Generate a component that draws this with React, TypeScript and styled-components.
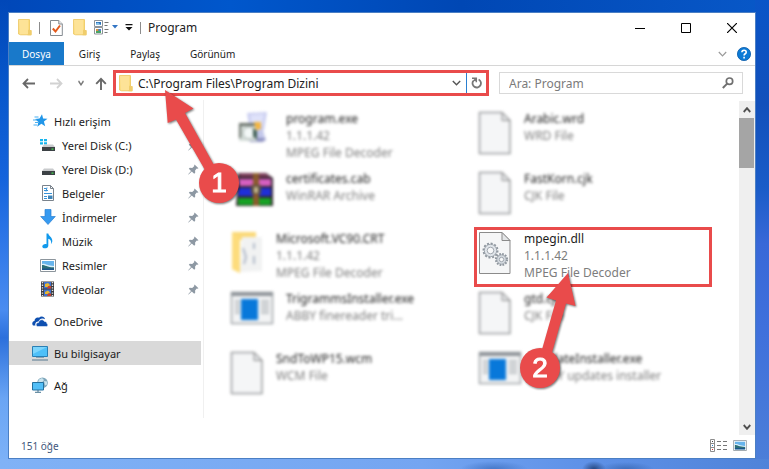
import React from 'react';
import styled, { createGlobalStyle, css } from 'styled-components';

const RED = '#e94b4b';

const GlobalStyle = createGlobalStyle`
  *, *::before, *::after { box-sizing: border-box; }
  body { margin: 0; font-family: 'Noto Sans', 'Open Sans', sans-serif; color: #222; }
  button, input { font: inherit; color: inherit; background: none; border: 0; margin: 0; padding: 0; }
  button { display: inline-flex; align-items: center; justify-content: center; }
  svg { display: block; flex: none; }
`;

const Desktop = styled.div`
  min-height: 100vh;
  display: flex;
  padding: 12px 13px 10px 8px;
  background:
    radial-gradient(ellipse 12px 8px at 594px 100%, #2b4f8c 10%, transparent),
    radial-gradient(ellipse 28px 7px at 626px 100%, #4272c0 10%, transparent),
    radial-gradient(ellipse 34px 8px at 494px 100%, #4a7ccc 10%, transparent),
    linear-gradient(90deg, #80b2f6, #74a5f1 55%, #5f92e8 75%, #4f83d9) 0 100% / 100% 10px no-repeat,
    linear-gradient(#0a55c8, #1250bb 22%, #1a5cc8 40%, #3868d8 52%, #3f70dc 70%, #4c7fd8) 100% 0 / 14px 100% no-repeat,
    linear-gradient(#0047b8, #0858cc 20%, #1464dc 38%, #2f78e8 52%, #4a8cf0 66%, #2c70dc 72%, #6aa5f4 85%, #7fb3f8) 0 0 / 8px 100% no-repeat,
    linear-gradient(90deg, #0047b8, #0057cc 30%, #0047b4 60%, #0858c8);
`;

const Window = styled.div`
  flex: 1;
  min-width: 0;
  display: flex;
  flex-direction: column;
  background: #fff;
  border: 1px solid #4b7fc4;
`;

const TitleBar = styled.header`
  display: flex;
  align-items: center;
  height: 29px;
  padding-left: 9px;
`;

const QuickTools = styled.div`
  display: flex;
  align-items: center;
  gap: 7px;
`;

const Separator = styled.span`
  width: 1px;
  height: 12px;
  background: #8c8c8c;
`;

const Title = styled.h1`
  flex: 1;
  margin: 0;
  padding-left: 7px;
  font-size: 12px;
  line-height: 16px;
  font-weight: 400;
`;

const WindowButton = styled.button`
  width: 46px;
  height: 28px;
`;

const Ribbon = styled.nav`
  display: flex;
  height: 24px;
  border-bottom: 1px solid #d6d6d6;
  font-size: 10px;
`;

const Tab = styled.button<{ $active?: boolean }>`
  height: 23px;
  padding: 0 15px;
  color: #1c1c1c;
  ${p => p.$active && css`
    padding: 0 13px;
    color: #fff;
    background: #1979ca;
  `}
`;

const RibbonEnd = styled.div`
  display: flex;
  align-items: center;
  gap: 10px;
  margin-left: auto;
  padding-right: 4px;
`;

const AddressRow = styled.div`
  display: flex;
  align-items: flex-start;
  height: 34px;
  padding: 4px 12px 0 9px;
  font-size: 12px;
`;

const NavButtons = styled.div`
  display: flex;
  align-items: center;
  height: 26px;
`;

const NavButton = styled.button<{ $w: number }>`
  width: ${p => p.$w}px;
  height: 22px;
`;

const AddressBar = styled.form`
  position: relative;
  flex: 1;
  min-width: 0;
  display: flex;
  align-items: center;
  height: 26px;
  margin-right: 10px;
  padding-left: 3px;
  border: 3px solid ${RED};
`;

const TextInput = styled.input`
  flex: 1;
  min-width: 0;
  height: 20px;
  padding-left: 5px;
  outline: 0;
  &::placeholder { color: #7b7b7b; opacity: 1; }
`;

const BarButton = styled.button<{ $divided?: boolean }>`
  width: 20px;
  height: 20px;
  ${p => p.$divided && css`border-left: 1px solid #2a7fd0;`}
`;

const SearchBox = styled.form`
  display: flex;
  align-items: center;
  width: 244px;
  height: 22px;
  margin-top: 2px;
  padding: 0 4px;
  border: 1px solid #d9d9d9;
`;

const Body = styled.div`
  flex: 1;
  display: flex;
`;

const Sidebar = styled.nav`
  width: 195px;
  margin-bottom: 17px;
  padding: 9px 2px 0 0;
  border-right: 1px solid #f0f0f0;
`;

const TreeGroup = styled.ul`
  list-style: none;
  margin: 0 0 8px;
  padding: 0;
`;

const TreeItem = styled.a<{ $child?: boolean; $selected?: boolean }>`
  display: flex;
  align-items: center;
  gap: 6px;
  height: 24px;
  padding: 0 2px 0 ${p => (p.$child ? 31 : 23)}px;
  font-size: 11px;
  color: #1c1c1c;
  text-decoration: none;
  background: ${p => (p.$selected ? '#d9d9d9' : 'transparent')};
`;

const TreeLabel = styled.span`
  flex: 1;
`;

const FileGrid = styled.ul`
  flex: 1;
  display: grid;
  grid-template-columns: 1fr 1fr;
  grid-auto-rows: 60px;
  column-gap: 10px;
  align-content: start;
  list-style: none;
  margin: 0;
  padding: 7px 27px 0 22px;
`;

const FileItem = styled.li<{ $marked?: boolean }>`
  position: relative;
  display: flex;
  min-width: 0;
  padding: 1px;
  border: 3px solid ${p => (p.$marked ? RED : 'transparent')};
`;

const FileContent = styled.div<{ $soft: boolean }>`
  display: flex;
  gap: 12px;
  min-width: 0;
  ${p => p.$soft && css`filter: blur(0.1rem);`}
`;

const IconSlot = styled.span<{ $wide?: boolean }>`
  flex: none;
  width: ${p => (p.$wide ? 44 : 34)}px;
`;

const FileText = styled.div`
  display: flex;
  flex-direction: column;
  gap: 1px;
  font-size: 12px;
  line-height: 16px;
  white-space: nowrap;
  color: #7d7d7d;
`;

const FileName = styled.div`
  color: #1c1c1c;
`;

const Scrollbar = styled.div`
  display: flex;
  flex-direction: column;
  width: 16px;
  margin-top: 1px;
  background: #efefef;
`;

const ScrollButton = styled.button`
  width: 15px;
  height: 17px;
`;

const Thumb = styled.div`
  width: 15px;
  height: 50px;
  margin-bottom: auto;
  background: #a5a5a5;
`;

const StatusBar = styled.footer`
  display: flex;
  align-items: center;
  height: 23px;
  padding: 0 8px 2px 12px;
  font-size: 10px;
  color: #3f587c;
`;

const StatusText = styled.span`
  flex: 1;
`;

const StatusButton = styled.button`
  margin-left: 6px;
`;

const Callout = styled.div<{ $x: number; $y: number; $w: number; $h: number; $side: 'start' | 'end' }>`
  position: absolute;
  z-index: 2;
  left: ${p => p.$x}px;
  top: ${p => p.$y}px;
  width: ${p => p.$w}px;
  height: ${p => p.$h}px;
  display: flex;
  align-items: flex-end;
  justify-content: flex-${p => p.$side};
  pointer-events: none;
  filter: drop-shadow(1px 1px 1px rgba(0, 0, 0, 0.55));
`;

const CalloutArrow = styled.svg`
  position: absolute;
  inset: 0;
`;

const Badge = styled.span`
  position: relative;
  display: flex;
  align-items: center;
  justify-content: center;
  width: 40px;
  height: 40px;
  border-radius: 50%;
  background: ${RED};
  color: #fff;
  font: 28px/40px 'Liberation Sans', sans-serif;
  -webkit-text-stroke: 1px #fff;
`;

const FolderSmall = () => (
  <svg width="14" height="17" viewBox="0 0 14 17">
    <path d="M0.5 0.5h11v11h1.7v4.3H2.5L0.5 15z" fill="#fbdd80" stroke="#ecc762" strokeWidth="0.8" />
    <path d="M11.2 1v9l-1.6 2v4.2h3.7v-4.6l-1.4-.6V1z" fill="#f0cd6b" />
    <path d="M1 1h9v14H2z" fill="#fde397" />
  </svg>
);

const DocCheck = () => (
  <svg width="13" height="16" viewBox="0 0 13 16">
    <path d="M.5.5h8.3l3.5 3.5v11.5H.5z" fill="#fff" stroke="#858b91" />
    <path d="M8.8.5V4h3.5" fill="#eee" stroke="#858b91" />
    <path d="M2.8 8.5l2.7 3L10 5.5" fill="none" stroke="#e35a1c" strokeWidth="2" />
  </svg>
);

const LayoutIcon = () => (
  <svg width="24" height="15" viewBox="0 0 24 15">
    <path d="M.5.5h8v6h-8zM.5 7.500h8v6.500h-8z" fill="#fff" stroke="#8d9399" />
    <path d="M2 2h5v3H2z" fill="#2b73bb" />
    <path d="M2 3.500l2-1 3 2.500H2z" fill="#8cc4ea" />
    <path d="M2 9h5v4H2z" fill="#4aa564" />
    <path d="M2 9h2.500v2H2z" fill="#d9923e" />
    <path d="M4.500 9H7v2H4.500z" fill="#4c7bd0" />
    <path d="M10.500 2.500h4M10.500 5.500h3M10.500 9.500h4M10.500 12.500h3" stroke="#777" />
    <path d="M18 5h6l-3 3.500z" fill="#3275c4" />
  </svg>
);

const Overflow = () => (
  <svg width="8" height="7" viewBox="0 0 8 7">
    <path d="M.5 0h7v1.300h-7zM0.500 3h7L4 6.500z" fill="#111" />
  </svg>
);

const Chevron = ({ up, color = '#666', w = 1.2, size = 9 }: { up?: boolean; color?: string; w?: number; size?: number }) => (
  <svg width={size} height="6" viewBox="0 0 9 6" preserveAspectRatio="none">
    <path d={up ? 'M.8 5l3.700-3.800L8.200 5' : 'M.8 1l3.700 3.800L8.200 1'} fill="none" stroke={color} strokeWidth={w} />
  </svg>
);

const BackArrow = ({ color, flip }: { color: string; flip?: boolean }) => (
  <svg width="13" height="11" viewBox="0 0 13 11">
    <path d={flip ? 'M0 5.500h11.500M7 1l4.500 4.500L7 10' : 'M13 5.500H1.500M6 1L1.500 5.500 6 10'} fill="none" stroke={color} strokeWidth="1.800" />
  </svg>
);

const UpArrow = () => (
  <svg width="12" height="13" viewBox="0 0 12 13">
    <path d="M6 13V1.800M1.200 6.800L6 1.800l4.800 5" fill="none" stroke="#686868" strokeWidth="1.900" />
  </svg>
);

const Refresh = () => (
  <svg width="11" height="12" viewBox="0 0 11 12">
    <path d="M7.600 2.500A4.200 4.200 0 1 1 2.200 4" fill="none" stroke="#777" strokeWidth="1.800" />
    <path d="M1 1.200h4.300v4M5.300 1.200L2 4.500" fill="none" stroke="#777" strokeWidth="1.500" />
  </svg>
);

const SearchIcon = () => (
  <svg width="12" height="12" viewBox="0 0 12 12">
    <circle cx="7.500" cy="4.200" r="3.200" fill="none" stroke="#707070" strokeWidth="1.700" />
    <path d="M5.200 6.600L.8 11" stroke="#707070" strokeWidth="2" />
  </svg>
);

const HelpIcon = () => (
  <svg width="14" height="14" viewBox="0 0 14 14">
    <circle cx="7" cy="7" r="6.600" fill="#0b7ad6" stroke="#0a5aa8" strokeWidth="0.800" />
    <path d="M4.900 5.200c0-2.600 4.300-2.500 4.300 0 0 1.600-2.100 1.500-2.100 3.200M7.100 9.700v1.700" fill="none" stroke="#fff" strokeWidth="1.600" />
  </svg>
);

const Pin = () => (
  <svg width="11" height="11" viewBox="0 0 11 11">
    <path d="M6.500.5l4 3.800-1.200.4-.6-.2-1.600 2 .1 2.300-1 .9-2.400-2.200L.6 10.500l-.4-.3L3 7 .8 4.700l1-.9 2.400.2 2.200-1.900-.3-.7z" fill="#8d98a3" />
  </svg>
);

const QuickIcon = () => (
  <svg width="16" height="14" viewBox="0 0 16 14">
    <path d="M10 .3l1.100 4.200 4.400.2-3.600 2.700 1.300 4.900-3.800-2.600-4.200 3 1.200-4.800L3 5l4.500-.4z" fill="#2196e8" />
    <path d="M2.500 3h4M1 6h4M3 8.500h3M1.500 11h3.500" stroke="#48b0f2" strokeWidth="1.200" />
  </svg>
);

const Disk = ({ system }: { system?: boolean }) => (
  <svg width="16" height="14" viewBox="0 0 16 14">
    {system && <path d="M0 1h3v2.300H0zM4 1h3v2.300H4zM0 4.300h3v2.300H0zM4 4.300h3v2.300H4z" fill="#16b5ee" />}
    <path d="M4 6.500h9L15 9H2z" fill="#c9cbcd" />
    <path d="M2 9h13v4H2z" fill="#3c4145" />
    <path d="M11.500 10.500h2v1.200h-2z" fill="#43e04e" />
  </svg>
);

const DocsIcon = () => (
  <svg width="16" height="16" viewBox="0 0 16 16">
    <path d="M2.500.5h8l3 3v12h-11z" fill="#fff" stroke="#7a838c" />
    <path d="M10.500.5v3h3" fill="none" stroke="#7a838c" />
    <path d="M4 3.500h2.500M4 5.500h4M4 8.500h8M4 11.500h3M4 13.500h3M7 2.500l-1 4" stroke="#3792d8" />
    <path d="M8 10.500h4.500v3.500H8z" fill="#3e84b8" />
  </svg>
);

const DownIcon = () => (
  <svg width="16" height="16" viewBox="0 0 16 16">
    <path d="M5 .5h6v7h4.300L8 15.500.7 7.500H5z" fill="#369af0" stroke="#2a7fd2" strokeWidth="0.700" />
  </svg>
);

const MusicIcon = () => (
  <svg width="16" height="16" viewBox="0 0 16 16">
    <path d="M6.500.5h1.800c.5 3 4.700 3.800 3.900 8.200-.1.900-.6 1.800-1.300 2.600.9-3-.4-4.900-2.600-5.600v7c0 3.300-6 3.500-6 .8 0-1.900 2.300-2.800 4.200-2.300z" fill="#1199ec" />
  </svg>
);

const PictureIcon = ({ small }: { small?: boolean }) => (
  <svg width={small ? 14 : 16} height={small ? 11 : 13} viewBox="0 0 16 13">
    <path d="M.5.5h15v12H.5z" fill="#fff" stroke="#8c959c" />
    <path d="M2 2h12v9H2z" fill="#67b4ec" />
    <path d="M2 5c3-1 5 2 12 2v2H2z" fill="#d9effa" />
    <path d="M2 6c3 0 5 2.200 12 2.300V11H2z" fill="#2c6f78" />
    <path d="M2 9.500h12V11H2z" fill="#1c548c" />
  </svg>
);

const VideoIcon = () => (
  <svg width="16" height="16" viewBox="0 0 16 16">
    <path d="M1 .5h13v15H1z" fill="#3b3b3f" />
    <path d="M2.500 1v14M12.500 1v14" stroke="#e3e3e3" strokeWidth="1.400" strokeDasharray="1.300 1.300" />
    <path d="M4 1h7v6.500H4zM4 8.500h7V15H4z" fill="#3e72d0" />
    <path d="M5 3l3-1 2 2-2 2H5z" fill="#e8b732" />
    <path d="M8 5h3v2.500H7z" fill="#c8402e" />
    <path d="M5 11l3-1.500 2 2-2 1.500H5z" fill="#e8b732" />
    <path d="M8 12.500h3V15H7z" fill="#c8402e" />
  </svg>
);

const CloudIcon = () => (
  <svg width="16" height="11" viewBox="0 0 16 11">
    <path d="M1 9.500C-.6 7.500.6 5.300 2.500 5 2.500 2.300 5 .9 7 1.800 8.800-.3 12.500.2 13 3.200 9.500 1.500 7 3.700 6.500 5.500 4 5.500 2.700 7.500 3.500 9.500z" fill="#0e4fb0" />
    <path d="M5.500 10.500C3.400 10 3.700 6.700 6.600 6.600 7 3.500 11 2.700 12.500 5.500c2-.1 2.500 1.300 2.300 2 1.600.5 1.300 3-.6 3z" fill="#0e4fb0" stroke="#fff" strokeWidth="0.500" />
  </svg>
);

const PcIcon = () => (
  <svg width="16" height="15" viewBox="0 0 16 15">
    <path d="M.5.500h15v10H.5z" fill="#4fc0f8" stroke="#2a7fb4" />
    <path d="M1 1h14L1 8z" fill="#7dd5fc" />
    <path d="M4 11.500h8" stroke="#8aa3b3" />
    <path d="M0 14h16" stroke="#57788f" />
  </svg>
);

const NetworkIcon = () => (
  <svg width="16" height="16" viewBox="0 0 16 16">
    <circle cx="10.500" cy="5.700" r="5.300" fill="#7fa7bb" />
    <path d="M7 2.500l3-1.500 2 2-2 2.500H6zM12 4l3 .5v3l-2 1z" fill="#c9e3ee" />
    <path d="M.5 5.500h11v7.500H.5z" fill="#52bff7" stroke="#24719f" />
    <path d="M3 15.300h6M6 13v2" stroke="#47758f" />
  </svg>
);

const PageIcon = ({ gears }: { gears?: boolean }) => (
  <svg width="34" height="44" viewBox="0 0 34 44">
    <path d="M1.500 1.500h22.500l8 8v33H1.500z" fill="#f5f6f7" stroke={gears ? '#8b8b8b' : '#9a9d9f'} strokeWidth={gears ? 1 : 1.500} />
    <path d="M24 1.500v8h8z" fill="#e4e6e8" stroke="#8b8b8b" />
    {gears && (
      <>
        <circle cx="12.500" cy="19.500" r="7" fill="none" stroke="#8f979f" strokeWidth="2" strokeDasharray="2 1.660" />
        <circle cx="12.500" cy="19.500" r="6.200" fill="#dfe4e9" stroke="#8f979f" strokeWidth="0.800" />
        <circle cx="12.500" cy="19.500" r="3.300" fill="#f7f8f9" stroke="#8f979f" strokeWidth="0.800" />
        <circle cx="23.500" cy="28.500" r="5.600" fill="none" stroke="#8f979f" strokeWidth="2" strokeDasharray="1.700 1.230" />
        <circle cx="23.500" cy="28.500" r="4.700" fill="#d3d9df" stroke="#8f979f" strokeWidth="0.800" />
        <circle cx="23.500" cy="28.500" r="2.200" fill="#f7f8f9" stroke="#8f979f" strokeWidth="0.800" />
      </>
    )}
  </svg>
);

const SetupIcon = () => (
  <svg width="44" height="44" viewBox="0 0 44 44">
    <path d="M17 2l20-1-3 18H20z" fill="#c9cdf0" />
    <path d="M20 4l14-1-2 12H22z" fill="#dfe2fa" />
    <path d="M20 19h13l3 11H16z" fill="#c3c7ea" />
    <path d="M18 27h18l-3 4H20z" fill="#8f93c2" />
    <path d="M9 12h18v18H9z" fill="#d5ddd9" />
    <path d="M9 12h20v3H9zM9 15h2v12H9z" fill="#6b736c" />
    <circle cx="19" cy="22" r="6" fill="#f3f8f7" stroke="#a6b1ad" />
    <path d="M23 17l4 3v9l-4-4z" fill="#3f5e53" />
    <path d="M24 11h7v7l-5 1z" fill="#f3b542" />
  </svg>
);

const ArchiveIcon = () => (
  <svg width="44" height="44" viewBox="0 0 44 44">
    <path d="M8 2h28l7 5v28H6z" fill="#33242f" />
    <path d="M9 2h26l6 4H10z" fill="#7c3d5a" />
    <path d="M8 8h33v7H8z" fill="#d65fc0" />
    <path d="M8 17h33v8H8z" fill="#1f2fd8" />
    <path d="M8 27h33v7H8z" fill="#17a325" />
    <path d="M23 2h6v33h-6z" fill="#8a5a2c" />
    <path d="M21 14h10v9H21z" fill="#5d5140" />
    <path d="M24 16h4v6h-4z" fill="#c9b98e" />
  </svg>
);

const FolderLarge = () => (
  <svg width="34" height="44" viewBox="0 0 34 44">
    <path d="M2 1h24v8H10v33L2 38z" fill="#fbd978" />
    <path d="M12 6h20v34l-22 1z" fill="#f1f2f2" />
    <path d="M2 1l8 7v34l-8-4z" fill="#fddc7c" />
    <path d="M13 17l3 9-2 7M24 12v6M24 25v8" stroke="#b0b9c8" strokeWidth="2" fill="none" />
  </svg>
);

const AppIcon = () => (
  <svg width="44" height="34" viewBox="0 0 44 34">
    <path d="M1.500 1.500h41v31h-41z" fill="#f3f4f5" stroke="#a2a6aa" strokeWidth="1.500" />
    <path d="M1 1h42v4H1z" fill="#8f9499" />
    <path d="M11 8h17v21H11z" fill="#0878da" />
    <path d="M5 10h5M5 13h5M5 16h5M5 19h5M5 22h5M31 10h8M31 13h8M31 16h8M31 19h8M31 22h8" stroke="#aeb2b6" strokeWidth="1.500" />
  </svg>
);

const DetailsIcon = () => (
  <svg width="17" height="13" viewBox="0 0 17 13">
    <path d="M.5.500h4v12h-4zM.5 4.500h4M.5 8.500h4" fill="#fff" stroke="#8d8d8d" />
    <path d="M2 2h1v1H2z" fill="#444" />
    <path d="M2 6h1v1H2z" fill="#2a7fd0" />
    <path d="M2 10h1v1H2z" fill="#e02a2a" />
    <path d="M7 2.500h4M13 2.500h4M7 6.500h4M13 6.500h4M7 10.500h4M13 10.500h4" stroke="#777" />
  </svg>
);

type TreeEntry = { label: string; icon: React.ReactNode; child?: boolean; selected?: boolean };

const tree: TreeEntry[][] = [
  [
    { label: 'Hızlı erişim', icon: <QuickIcon /> },
    { label: 'Yerel Disk (C:)', icon: <Disk system />, child: true },
    { label: 'Yerel Disk (D:)', icon: <Disk />, child: true },
    { label: 'Belgeler', icon: <DocsIcon />, child: true },
    { label: 'İndirmeler', icon: <DownIcon />, child: true },
    { label: 'Müzik', icon: <MusicIcon />, child: true },
    { label: 'Resimler', icon: <PictureIcon />, child: true },
    { label: 'Videolar', icon: <VideoIcon />, child: true },
  ],
  [{ label: 'OneDrive', icon: <CloudIcon /> }],
  [{ label: 'Bu bilgisayar', icon: <PcIcon />, selected: true }],
  [{ label: 'Ağ', icon: <NetworkIcon /> }],
];

type FileEntry = { name: string; lines: string[]; icon: React.ReactNode; wide?: boolean; marked?: boolean };

const files: FileEntry[] = [
  { name: 'program.exe', lines: ['1.1.1.42', 'MPEG File Decoder'], icon: <SetupIcon />, wide: true },
  { name: 'Arabic.wrd', lines: ['WRD File'], icon: <PageIcon /> },
  { name: 'certificates.cab', lines: ['WinRAR Archive'], icon: <ArchiveIcon />, wide: true },
  { name: 'FastKorn.cjk', lines: ['CJK File'], icon: <PageIcon /> },
  { name: 'Microsoft.VC90.CRT', lines: ['1.1.1.42', 'MPEG File Decoder'], icon: <FolderLarge /> },
  { name: 'mpegin.dll', lines: ['1.1.1.42', 'MPEG File Decoder'], icon: <PageIcon gears />, marked: true },
  { name: 'TrigrammsInstaller.exe', lines: ['ABBY finereader tri...'], icon: <AppIcon />, wide: true },
  { name: 'gtd.cjk', lines: ['CJK File'], icon: <PageIcon /> },
  { name: 'SndToWP15.wcm', lines: ['WCM File'], icon: <PageIcon /> },
  { name: 'UpdateInstaller.exe', lines: ['ABBY updates installer'], icon: <AppIcon />, wide: true },
];

export default function App() {
  return (
    <>
      <GlobalStyle />
      <Desktop>
        <Window>
          <TitleBar>
            <QuickTools>
              <FolderSmall />
              <Separator />
              <NavButton $w={19} aria-label="Özellikler"><DocCheck /></NavButton>
              <FolderSmall />
              <LayoutIcon />
              <Overflow />
              <Separator />
            </QuickTools>
            <Title>Program</Title>
            <WindowButton aria-label="Simge durumuna küçült">
              <svg width="10" height="10" viewBox="0 0 10 10"><path d="M0 5.500h10" stroke="#000" /></svg>
            </WindowButton>
            <WindowButton aria-label="Ekranı kapla">
              <svg width="10" height="10" viewBox="0 0 10 10"><path d="M.5.500h9v9h-9z" fill="none" stroke="#000" /></svg>
            </WindowButton>
            <WindowButton aria-label="Kapat">
              <svg width="10" height="10" viewBox="0 0 10 10"><path d="M0 0l10 10M10 0L0 10" stroke="#000" strokeWidth="1.200" /></svg>
            </WindowButton>
          </TitleBar>

          <Ribbon>
            <Tab $active>Dosya</Tab>
            <Tab>Giriş</Tab>
            <Tab>Paylaş</Tab>
            <Tab>Görünüm</Tab>
            <RibbonEnd>
              <button aria-label="Şeridi genişlet"><Chevron color="#9a9a9a" /></button>
              <button aria-label="Yardım"><HelpIcon /></button>
            </RibbonEnd>
          </Ribbon>

          <AddressRow>
            <NavButtons>
              <NavButton $w={20} aria-label="Geri"><BackArrow color="#686868" /></NavButton>
              <NavButton $w={36} aria-label="İleri"><BackArrow color="#d2d2d2" flip /></NavButton>
              <NavButton $w={14} aria-label="Son konumlar"><Chevron color="#777" w={1.8} size={6} /></NavButton>
              <NavButton $w={25} aria-label="Yukarı"><UpArrow /></NavButton>
            </NavButtons>
            <AddressBar onSubmit={e => e.preventDefault()}>
              <FolderSmall />
              <TextInput aria-label="Adres" defaultValue={'C:\\Program Files\\Program Dizini'} />
              <BarButton type="button" aria-label="Önceki konumlar"><Chevron color="#555" w={1.4} /></BarButton>
              <BarButton type="button" $divided aria-label="Yenile"><Refresh /></BarButton>
              <Callout $x={33} $y={15} $w={90} $h={115} $side="end">
                <CalloutArrow width="90" height="115" viewBox="149 88 90 115">
                  <path d="M165 90l28.500 18.500-8.500 4.500 29 52-9 5-29-50.500-8.300 3.500z" fill={RED} />
                </CalloutArrow>
                <Badge>1</Badge>
              </Callout>
            </AddressBar>
            <SearchBox role="search" onSubmit={e => e.preventDefault()}>
              <TextInput type="text" aria-label="Ara" placeholder="Ara: Program" />
              <BarButton aria-label="Ara"><SearchIcon /></BarButton>
            </SearchBox>
          </AddressRow>

          <Body>
            <Sidebar>
              {tree.map((group, i) => (
                <TreeGroup key={i}>
                  {group.map(item => (
                    <li key={item.label}>
                      <TreeItem href="#" $child={item.child} $selected={item.selected}>
                        {item.icon}
                        <TreeLabel>{item.label}</TreeLabel>
                        {item.child && <Pin />}
                      </TreeItem>
                    </li>
                  ))}
                </TreeGroup>
              ))}
            </Sidebar>

            <FileGrid>
              {files.map(file => (
                <FileItem key={file.name} $marked={file.marked}>
                  <FileContent $soft={!file.marked}>
                    <IconSlot $wide={file.wide}>{file.icon}</IconSlot>
                    <FileText>
                      <FileName>{file.name}</FileName>
                      {file.lines.map(line => <div key={line}>{line}</div>)}
                    </FileText>
                  </FileContent>
                  {file.marked && (
                    <Callout $x={43} $y={41} $w={70} $h={117} $side="start">
                      <CalloutArrow width="70" height="117" viewBox="520 271 70 117">
                        <path d="M568 273l7.500 33-9.500-2.500-16 56-10-3 16-56-9.500-3z" fill={RED} />
                      </CalloutArrow>
                      <Badge>2</Badge>
                    </Callout>
                  )}
                </FileItem>
              ))}
            </FileGrid>

            <Scrollbar>
              <ScrollButton aria-label="Yukarı kaydır"><Chevron up color="#505050" w={2} size={8} /></ScrollButton>
              <Thumb />
              <ScrollButton aria-label="Aşağı kaydır"><Chevron color="#505050" w={2} size={8} /></ScrollButton>
            </Scrollbar>
          </Body>

          <StatusBar>
            <StatusText>151 öğe</StatusText>
            <StatusButton aria-label="Ayrıntılar"><DetailsIcon /></StatusButton>
            <StatusButton aria-label="Büyük simgeler"><PictureIcon small /></StatusButton>
          </StatusBar>
        </Window>
      </Desktop>
    </>
  );
}
